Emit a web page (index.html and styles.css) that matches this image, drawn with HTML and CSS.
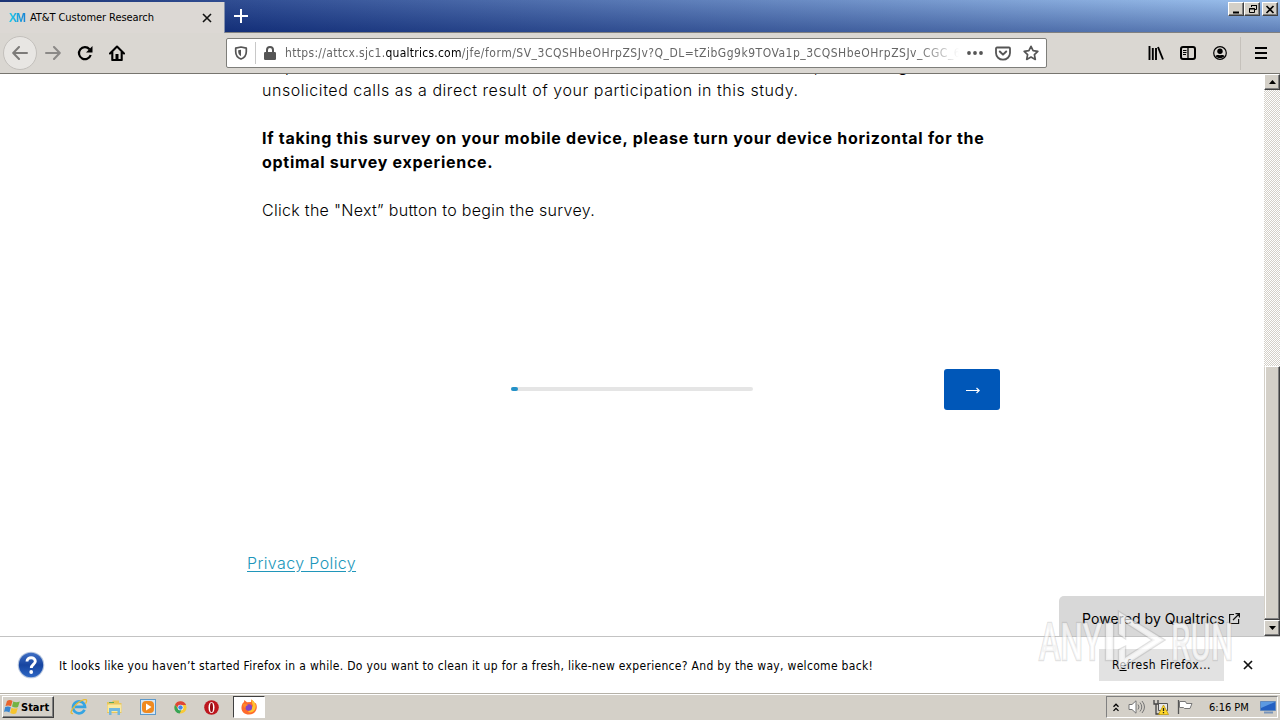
FILE: index.html
```html
<!DOCTYPE html>
<html lang="en">
<head>
  <meta charset="UTF-8" />
  <title>AT&amp;T Customer Research</title>
  <link rel="stylesheet" href="styles.css">
</head>
<body>
  <div class="title-bar">
    <div class="tab">
      <span class="xm">XM</span>
      <span class="tab-title">AT&amp;T Customer Research</span>
      <svg class="tab-close" width="10" height="10" viewBox="0 0 10 10"><path d="M1 1l8 8M9 1l-8 8" stroke="#111" stroke-width="1.6"/></svg>
    </div>
    <svg class="new-tab" width="14" height="14" viewBox="0 0 14 14"><path d="M7 0v14M0 7h14" stroke="#fff" stroke-width="2"/></svg>
    <div class="window-buttons">
      <button class="win-btn"><svg width="11" height="9" viewBox="0 0 11 9"><path d="M2 7.500h6" stroke="#000" stroke-width="2"/></svg></button>
      <button class="win-btn"><svg width="11" height="10" viewBox="0 0 11 10" fill="none" stroke="#000"><path d="M4.500 3V1.500h5v4H8M4 1.500h6M2.500 4.500h5v4h-5zM2 5h6"/></svg></button>
      <button class="win-btn last"><svg width="10" height="9" viewBox="0 0 10 9"><path d="M1.500 1l7 7M8.500 1l-7 7" stroke="#000" stroke-width="1.700"/></svg></button>
    </div>
  </div>

  <div class="nav-bar">
    <div class="nav-left">
      <span class="back"><svg width="16" height="14" viewBox="0 0 16 14" fill="none" stroke="#7d7b79" stroke-width="2" stroke-linecap="round" stroke-linejoin="round"><path d="M15 7H1.500M7 1L1.200 7 7 13"/></svg></span>
      <svg width="16" height="14" viewBox="0 0 16 14" fill="none" stroke="#8b8987" stroke-width="2" stroke-linecap="round" stroke-linejoin="round"><path d="M1 7h13.500M9 1l5.800 6L9 13"/></svg>
      <svg class="reload" width="16" height="16" viewBox="0 0 16 16"><path d="M12.500 4.200A6 6 0 1 0 13.700 10" fill="none" stroke="#000" stroke-width="2.200"/><path d="M15.500 1v6.500H9z"/></svg>
      <svg class="home" width="16" height="16" viewBox="0 0 16 16"><path d="M1 8.500L8 1.500l7 7M3.300 7v8h9.400V7" fill="none" stroke="#000" stroke-width="2.100" stroke-linecap="round" stroke-linejoin="round"/><path d="M6.500 9h3v6h-3z"/></svg>
    </div>
    <div class="url-bar">
      <svg class="shield" width="14" height="14" viewBox="0 0 14 14"><path d="M7 1l5.300 1.200v3.500c0 3.600-2 6-5.300 7.300-3.300-1.300-5.300-3.700-5.300-7.300V2.200z" fill="none" stroke="#555" stroke-width="1.700" stroke-linejoin="round"/><path d="M7 3.700v6.600C5 9.300 4.200 7.800 4.200 5.600V4.300z" fill="#555"/></svg>
      <span class="url-divider"></span>
      <svg class="lock" width="12" height="14" viewBox="0 0 12 14"><path d="M3 7V4a3 3 0 0 1 6 0v3" fill="none" stroke="#555" stroke-width="2"/><rect y="6" width="12" height="8" rx="1.200" fill="#555"/></svg>
      <div class="url"><span class="u1">https://attcx.sjc1.</span><span class="domain">qualtrics.com</span><span class="u2">/jfe/form/SV_3CQSHbeOHrpZSJv?Q_DL=tZibGg9k9TOVa1p_3CQSHbeOHrpZSJv_CGC_6</span></div>
      <svg class="dots" width="16" height="4" viewBox="0 0 16 4" fill="#555"><circle cx="2" cy="2" r="1.900"/><circle cx="8" cy="2" r="1.900"/><circle cx="14" cy="2" r="1.900"/></svg>
      <svg class="pocket" width="16" height="15" viewBox="0 0 16 15" fill="none" stroke="#555" stroke-linecap="round" stroke-linejoin="round"><path d="M2 1.500h12a1 1 0 0 1 1 1V7A7 6.700 0 0 1 1 7V2.500a1 1 0 0 1 1-1z" stroke-width="1.800"/><path d="M4.800 5.500L8 8.600l3.200-3.100" stroke-width="2"/></svg>
      <svg class="star" width="16" height="16" viewBox="0 0 16 16"><path d="M8 1.300l2.100 4.400 4.700.6-3.400 3.300.9 4.800L8 12.100l-4.300 2.300.9-4.800L1.200 6.300l4.700-.6z" fill="none" stroke="#555" stroke-width="1.700" stroke-linejoin="round"/></svg>
    </div>
    <div class="nav-right">
      <svg width="16" height="14" viewBox="0 0 16 14" stroke="#000" stroke-width="1.900"><path d="M1.500 0v14M4.800 2v12M8 2v12M10 1l5 12.500"/></svg>
      <svg width="16" height="14" viewBox="0 0 16 14" fill="none" stroke="#000"><rect x="1" y="1" width="14" height="12" rx="2" stroke-width="2"/><path d="M8 1v12" stroke-width="1.300"/><path d="M3 4.500h3.500M3 6.500h3.500M3 8.500h3" stroke-width="1"/></svg>
      <svg width="14" height="14" viewBox="0 0 14 14"><circle cx="7" cy="7" r="6.300" fill="none" stroke="#000" stroke-width="1.200"/><circle cx="7" cy="5.300" r="2.700"/><path d="M2.500 10C4 8.500 5 9.200 7 9.200s3-.7 4.500.8C10.500 11.500 9 12 7 12s-3.500-.5-4.500-2z"/></svg>
      <span class="nav-divider"></span>
      <svg width="12" height="12" viewBox="0 0 12 12" stroke="#000" stroke-width="2"><path d="M0 1h12M0 6h12M0 11h12"/></svg>
    </div>
  </div>

  <div class="viewport">
    <div class="page">
      <div class="clipped"><span class="c1">p</span><span class="c2">,</span><span class="c3">g</span></div>
      <p class="l1">unsolicited calls as a direct result of your participation in this study.</p>
      <p class="bold">If taking this survey on your mobile device, please turn your device horizontal for the<br>optimal survey experience.</p>
      <p class="l4">Click the "Next” button to begin the survey.</p>
      <div class="controls">
        <div class="progress"><div class="progress-fill"></div></div>
        <button class="next"><svg width="14" height="8" viewBox="0 0 14 8" fill="none" stroke="#fff" stroke-width="1.200"><path d="M0 4.500h13M10.500 2l2.700 2.500L10.500 7"/></svg></button>
      </div>
      <a class="privacy" href="#">Privacy Policy</a>
      <div class="powered"><span>Powered by Qualtrics</span><svg width="11" height="11" viewBox="0 0 11 11" fill="none" stroke="#111" stroke-width="1.200"><path d="M5 1.500H.6v9h9V6M4 7l6-6M6.500.6h3.900v4"/></svg></div>
    </div>
    <div class="scrollbar">
      <button class="scroll-btn"><svg width="7" height="4" viewBox="0 0 7 4"><path d="M0 4l3.500-4L7 4z"/></svg></button>
      <div class="track"><div class="thumb"></div></div>
      <button class="scroll-btn"><svg width="7" height="4" viewBox="0 0 7 4"><path d="M0 0l3.500 4L7 0z"/></svg></button>
    </div>
  </div>

  <div class="notification">
    <svg width="28" height="28" viewBox="0 0 28 28">
      <defs><linearGradient id="help" x2="0" y2="1"><stop stop-color="#3f6fc5"/><stop offset=".5" stop-color="#1745a0"/><stop offset="1" stop-color="#2c66c4"/></linearGradient></defs>
      <circle cx="14" cy="14" r="13.300" fill="#b9c8df"/><circle cx="14" cy="14" r="12.200" fill="url(#help)"/>
      <path d="M10 10.500c0-5.200 8.300-4.900 8.300-.3 0 3-4 3.300-4 6.800" fill="none" stroke="#fff" stroke-width="2.900"/><circle cx="14.200" cy="21" r="1.900" fill="#fff"/>
    </svg>
    <span class="notice-text">It looks like you haven’t started Firefox in a while. Do you want to clean it up for a fresh, like-new experience? And by the way, welcome back!</span>
    <button class="refresh">R<u>e</u>fresh Firefox...</button>
    <svg class="notice-close" width="10" height="10" viewBox="0 0 10 10"><path d="M1 1l8 8M9 1l-8 8" stroke="#111" stroke-width="1.700"/></svg>
  </div>

  <div class="taskbar">
    <button class="start">
      <svg width="17" height="16" viewBox="0 0 17 16"><path d="M3 2c2-1.500 4-1 5.500 0L7 7.300C5.500 6.300 3.500 6 1.500 7z" fill="#e8642c"/><path d="M9.300 2.500c2 1 4 1 6.500 0L14 8c-2 1-4 .6-6-.4z" fill="#73b343"/><path d="M1.200 8c2-1 4-.7 5.600.2L5.400 13.500C4 12.500 2 12.300 0 13z" fill="#3a86cf"/><path d="M7.500 8.700c2 1 4 1.200 6.200.3l-1.500 5.300c-2 1-4 .6-6-.4z" fill="#f6c42d"/></svg>
      <span>Start</span>
    </button>
    <div class="launch">
      <svg width="18" height="18" viewBox="0 0 18 18" fill="none"><path d="M14.500 11.800A6 6 0 1 1 15 8.800H5" stroke="#35a4e2" stroke-width="2.700"/><path d="M3 15.500C-3 16.500 6 4 14 1.700c4-1 2.500 2.500 1.500 4" stroke="#e6bb35" stroke-width="1.300"/></svg>
      <svg width="17" height="17" viewBox="0 0 17 17"><path d="M1 3h5l1-1.500h6V4h2.500v10H1z" fill="#e8c65d"/><path d="M1.500 5.500h13.800V13H1.500z" fill="#fae99f"/><path d="M3 16V9h11v7h-2.500v-4h-6v4z" fill="#70b8df"/><path d="M3 3.500h5" stroke="#5aaa5c"/></svg>
      <svg width="16" height="16" viewBox="0 0 16 16"><rect x=".5" y=".5" width="15" height="15" fill="#d5e7f6" stroke="#5d99ca"/><rect x="2" y="2" width="12" height="12" rx="4" fill="#f08a20"/><path d="M6 4.500l5.500 3.500L6 11.500z" fill="#fff"/></svg>
      <svg width="13" height="13" viewBox="0 0 15 15"><circle cx="7.500" cy="7.500" r="7" fill="#f8c936"/><path d="M1.200 4.200A7 7 0 0 1 14 4.500H7.500L5 9z" fill="#df4638"/><path d="M1.200 4.200L5 9.500l3.500 1-2 4C1 13.700-.8 8.500 1.200 4.200z" fill="#37a456"/><circle cx="7.500" cy="7.500" r="3.300" fill="#fff"/><circle cx="7.500" cy="7.500" r="2.600" fill="#4285e8"/></svg>
      <svg width="15" height="15" viewBox="0 0 15 15"><circle cx="7.500" cy="7.500" r="7.300" fill="#bd171e"/><ellipse cx="7.500" cy="7.500" rx="3" ry="5.600" fill="#fff"/><ellipse cx="7.500" cy="7.500" rx="1.500" ry="4.800" fill="#970b12"/></svg>
    </div>
    <div class="running"><svg width="16" height="16" viewBox="0 0 16 16"><path d="M3 3l.3-2L6 3.200 10 3V.5c2 .8 3.300 2.300 3.800 4l1-.5c3 6-1 11.500-6.800 11.500S-1.500 10.500 1.500 4.500z" fill="#ff6b2c"/><path d="M10 .5c4 2 6 6 4 10-1.500 3-5 3.500-7 2.500l5-6z" fill="#ffc42e"/><circle cx="7.800" cy="8.500" r="3.300" fill="#8445c7"/><path d="M2 5c2-.5 3 .5 5 .7-1 1.200-2.700 1-2.500 3.300C2.500 8.500 2 7 2 5z" fill="#ff8a2a"/></svg></div>
    <div class="tray">
      <svg class="chev" width="6" height="9" viewBox="0 0 6 9" fill="none" stroke="#000" stroke-width="1.300"><path d="M.5 3.700L3 1.200l2.500 2.500M.5 7.900L3 5.400l2.500 2.500"/></svg>
      <svg width="17" height="14" viewBox="0 0 17 14" fill="none" stroke="#757575"><path d="M1 4.500h3l4-3.700v12.400L4 9.500H1z" fill="#fff"/><path d="M10 4.500q2 2.500 0 5M12 2.500q3.500 4.500 0 9M14 1q5 6 0 12"/></svg>
      <svg width="16" height="15" viewBox="0 0 16 15"><path d="M5.500 3.500h9v7h-9z" fill="#e7e7e7" stroke="#555"/><path d="M1 0v4h4V0M3 4v10h4" fill="none" stroke="#444" stroke-width="1.300"/><path d="M10.500 5l5 9.500h-10z" fill="#ffd829" stroke="#b79200" stroke-width=".7"/><path d="M10.500 8v3M10.500 12v1.300" stroke="#222" stroke-width="1.300"/></svg>
      <svg width="16" height="14" viewBox="0 0 16 14"><path d="M1.500 0v14" stroke="#555" stroke-width="1.300"/><path d="M2.500 1.500h6l1 2h5.500l-2 5H7.500l-1-1h-4z" fill="#fff" stroke="#777"/></svg>
      <span class="clock">6:16 PM</span>
      <svg width="16" height="14" viewBox="0 0 16 14"><path d="M.5 1.500h15v9H.5z" fill="#2460c2" stroke="#6189bd"/><path d="M1 2h14L1 8z" fill="#5c99e1"/><path d="M4 12.500h9" stroke="#7994b9" stroke-width="2"/></svg>
    </div>
  </div>

  <svg class="watermark" width="204" height="64" viewBox="0 0 204 64">
    <g stroke="#999" stroke-opacity=".3" stroke-width="2.500" fill="#fff" fill-opacity=".65" paint-order="stroke">
      <text x="5" y="51" textLength="63" lengthAdjust="spacingAndGlyphs">ANY</text>
      <text x="137" y="51" textLength="62" lengthAdjust="spacingAndGlyphs">RUN</text>
      <path d="M72 14h7v37h-7zM85 3l45 28-45 29V41l6-3v11l28-18-28-18v16l-6-4z"/>
    </g>
  </svg>
</body>
</html>
```
FILE: styles.css
```css
* {
  box-sizing: border-box;
}

body {
  margin: 0;
  width: 1280px;
  height: 720px;
  overflow: hidden;
  display: flex;
  flex-direction: column;
  background: #fff;
  color: #000;
  font-family: "DejaVu Sans Condensed", "Open Sans", sans-serif;
  font-size: 11px;
}

svg {
  flex: none;
  display: block;
}

button {
  font-family: inherit;
  color: #000;
  padding: 0;
  border: none;
}

/* title bar */
.title-bar {
  height: 33px;
  flex: none;
  display: flex;
  align-items: flex-start;
  border-bottom: 1px solid #808080;
  background:
    linear-gradient(rgba(255, 255, 255, 0.08), rgba(0, 20, 90, 0.36)),
    linear-gradient(90deg, #0a246a, #21418c 20%, #94bcec);
}

.tab {
  width: 225px;
  height: 33px;
  margin-top: 2px;
  padding: 0 12px 2px 9px;
  display: flex;
  align-items: center;
  background: #dcd8d4;
  border-right: 1px solid #8390ac;
}

.xm {
  width: 21px;
  font: bold 12px "Liberation Sans", sans-serif;
  letter-spacing: -1px;
  background: linear-gradient(90deg, #20cbe8, #1670d0);
  -webkit-background-clip: text;
  color: transparent;
}

.tab-title {
  flex: 1;
  white-space: nowrap;
  letter-spacing: -0.07px;
}

.new-tab {
  margin: 9px 0 0 9px;
}

.window-buttons {
  display: flex;
  margin: 2px 2px 0 auto;
}

.win-btn,
.scroll-btn {
  width: 16px;
  height: 14px;
  display: flex;
  align-items: center;
  justify-content: center;
  background: #d4d0c8;
  border: 1px solid;
  border-color: #fff #404040 #404040 #fff;
  box-shadow: inset -1px -1px #808080;
}

.win-btn.last {
  margin-left: 2px;
}

/* navigation */
.nav-bar {
  height: 41px;
  flex: none;
  display: flex;
  align-items: center;
  background: #dad7d2;
  border-bottom: 1px solid #77756f;
}

.nav-left {
  width: 226px;
  padding-left: 3px;
  display: flex;
  align-items: center;
}

.back {
  width: 34px;
  height: 34px;
  margin-right: 8px;
  border: 1px solid #c3c0bc;
  border-radius: 50%;
  background: #e8e6e3;
  display: flex;
  align-items: center;
  justify-content: center;
}

.reload {
  margin-left: 16px;
}

.home {
  margin-left: 16px;
}

.url-bar {
  width: 821px;
  height: 30px;
  padding: 0 7px;
  display: flex;
  align-items: center;
  background: #fff;
  border: 1px solid #7e7e7a;
  border-radius: 2px;
}

.url-divider {
  width: 1px;
  height: 22px;
  margin: 0 8px 0 7px;
  background: #c8c8c8;
}

.url {
  width: 675px;
  margin: 0 8px 0 9px;
  overflow: hidden;
  white-space: nowrap;
  font-size: 12px;
  color: #666;
  -webkit-mask-image: linear-gradient(90deg, #000 94%, transparent);
}

.u1 {
  letter-spacing: 0.32px;
}

.domain {
  color: #000;
  letter-spacing: 0.25px;
}

.u2 {
  letter-spacing: 0.51px;
}

.pocket {
  margin-left: 12px;
}

.star {
  margin-left: 12px;
}

.nav-right {
  flex: 1;
  padding-right: 13px;
  display: flex;
  align-items: center;
  justify-content: flex-end;
  gap: 16px;
}

.nav-right svg:nth-child(3) {
  margin-left: 1px;
}

.nav-divider {
  width: 1px;
  height: 33px;
  margin: 0 -2px 0 -3px;
  background: #c5c1bb;
}

/* survey page */
.viewport {
  height: 562px;
  flex: none;
  display: flex;
}

.page {
  width: 1264px;
  padding-left: 262px;
  display: flex;
  flex-direction: column;
  font-family: Inter, "Open Sans", sans-serif;
  font-size: 16px;
  font-weight: 300;
  line-height: 24px;
}

.page p {
  margin: 0 0 24px;
  white-space: nowrap;
}

.page .l1 {
  letter-spacing: 0.55px;
}

.page .bold {
  font-weight: 700;
  letter-spacing: 0.72px;
}

.page .l4 {
  letter-spacing: 0.3px;
}

.clipped {
  height: 4px;
  overflow: hidden;
  display: flex;
  align-items: flex-end;
}

.c1 {
  width: 552px;
  padding-left: 23px;
}

.c2 {
  width: 84px;
}

.controls {
  width: 738px;
  height: 41px;
  margin-top: 123px;
  display: flex;
  align-items: center;
}

.progress {
  width: 242px;
  height: 4px;
  margin: 0 0 2px 249px;
  border-radius: 2px;
  background: #e5e5e5;
}

.progress-fill {
  width: 7px;
  height: 4px;
  border-radius: 2px;
  background: #2492c8;
}

.next {
  width: 56px;
  height: 41px;
  margin-left: auto;
  padding: 1px 0 0 2px;
  border-radius: 3px;
  background: #0057b8;
  display: flex;
  align-items: center;
  justify-content: center;
}

.privacy {
  align-self: flex-start;
  margin: 141px 0 0 -15px;
  color: #2096ba;
  letter-spacing: 0.38px;
  text-underline-offset: 2px;
}

.powered {
  width: 205px;
  height: 40px;
  margin: auto 0 0 auto;
  padding: 5px 24px 0 23px;
  display: flex;
  align-items: center;
  justify-content: space-between;
  border-radius: 5px 0 0 0;
  background: #d8d8d8;
  font-size: 14px;
  font-weight: 400;
  letter-spacing: 0.06px;
  white-space: nowrap;
}

.scrollbar {
  width: 16px;
  display: flex;
  flex-direction: column;
}

.scroll-btn {
  height: 16px;
  flex: none;
}

.track {
  flex: 1;
  display: flex;
  align-items: flex-end;
  background: repeating-conic-gradient(#d4d0c8 0 25%, #fff 0 50%) 0 0 / 2px 2px;
}

.thumb {
  width: 16px;
  height: 254px;
  background: #d4d0c8;
  border: 1px solid;
  border-color: #fff #404040 #404040 #d4d0c8;
  box-shadow: inset -1px -1px #808080, inset 1px 0 #fff;
}

/* firefox notice */
.notification {
  height: 57px;
  flex: none;
  padding-left: 17px;
  display: flex;
  align-items: center;
  border-top: 1px solid #c3c3c3;
}

.notice-text {
  width: 1054px;
  padding: 1px 0 0 14px;
  font-size: 12px;
  letter-spacing: 0.31px;
  white-space: nowrap;
}

.refresh {
  width: 125px;
  height: 32px;
  background: #e2e2e2;
  font-size: 12px;
  letter-spacing: 0.5px;
}

.notice-close {
  margin-left: 19px;
}

/* taskbar */
.taskbar {
  height: 27px;
  flex: none;
  display: flex;
  align-items: center;
  background: #d4d0c8;
  border-top: 1px solid #b5b1a8;
  box-shadow: inset 0 1px #fff;
}

.start {
  width: 52px;
  height: 22px;
  margin-left: 2px;
  padding-left: 1px;
  display: flex;
  align-items: center;
  background: #d4d0c8;
  border: 1px solid;
  border-color: #fff #404040 #404040 #fff;
  box-shadow: inset -1px -1px #808080;
  font-size: 11px;
  font-weight: bold;
}

.launch {
  width: 179px;
  padding-left: 16px;
  display: flex;
  align-items: center;
  gap: 17.500px;
}

.running {
  width: 32px;
  height: 22px;
  display: flex;
  align-items: center;
  justify-content: center;
  background: #fff;
  border: 1px solid;
  border-color: #404040 #fff #fff #404040;
}

.tray {
  width: 172px;
  height: 22px;
  margin: 0 2px 0 auto;
  padding: 0 1px 0 6px;
  display: flex;
  align-items: center;
  gap: 8px;
  border: 1px solid;
  border-color: #808080 #fff #fff #808080;
}

.chev {
  margin-right: 1px;
}

.clock {
  flex: 1;
  padding-left: 8px;
  white-space: nowrap;
}

/* lies over the page and the notice */
.watermark {
  position: absolute;
  left: 1034px;
  top: 609px;
  pointer-events: none;
  font: 500 52px Roboto, sans-serif;
}
```
